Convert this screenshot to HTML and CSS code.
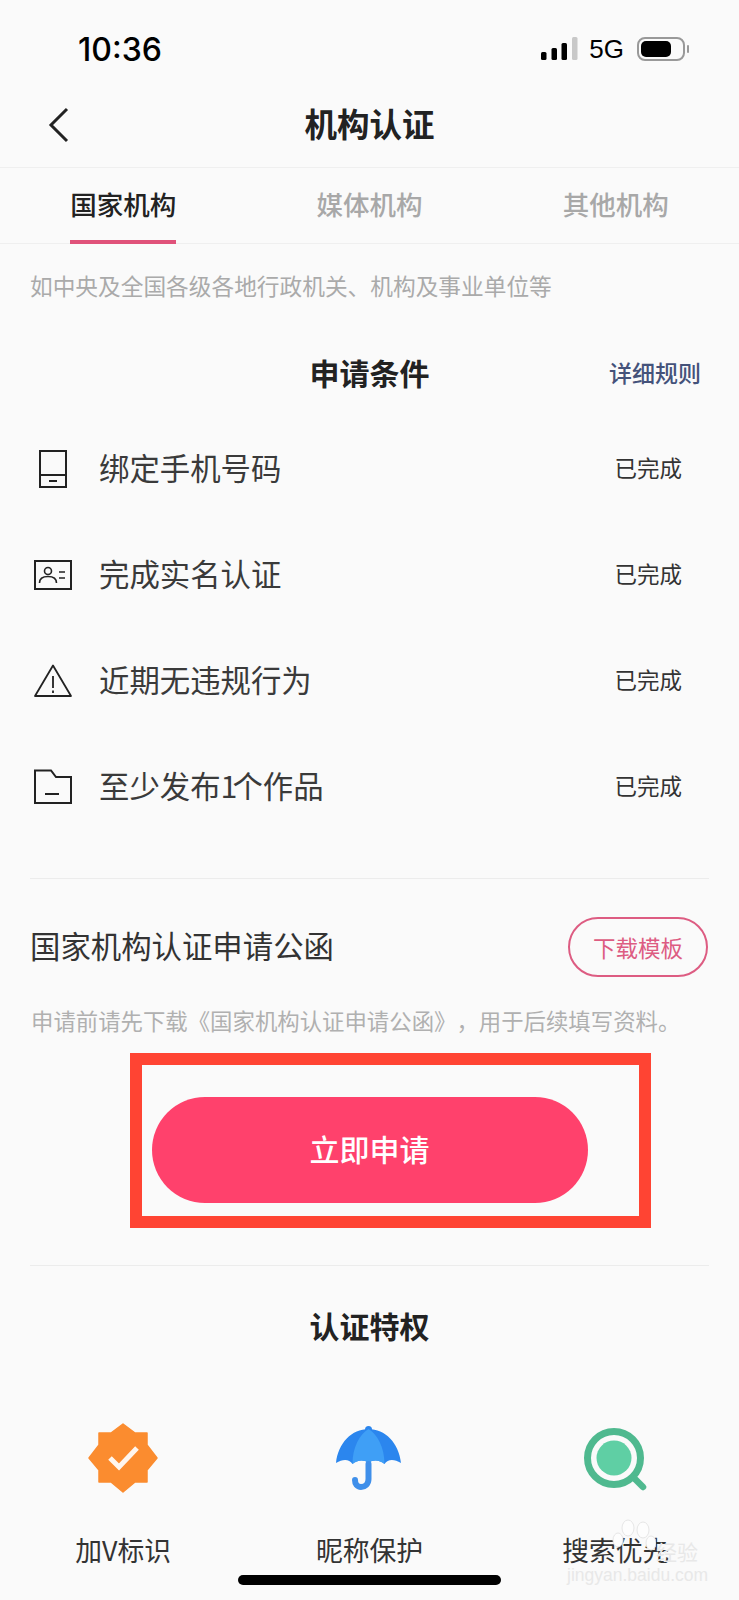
FILE: index.html
```html
<!DOCTYPE html>
<html lang="zh-CN">
<head>
<meta charset="UTF-8">
<meta name="viewport" content="width=device-width, initial-scale=1.0">
<title>机构认证</title>
<link rel="stylesheet" href="styles.css">
</head>
<body>

<div class="page">

  <div class="status">
    <span class="time">10:36</span>
    <div class="status-right">
      <svg class="signal" width="37" height="24" viewBox="0 0 37 24">
        <rect x="0" y="15" width="5.500" height="8" rx="1.500" fill="#000"/>
        <rect x="10.500" y="11" width="5.500" height="12" rx="1.500" fill="#000"/>
        <rect x="20.500" y="6" width="5.500" height="17" rx="1.500" fill="#000"/>
        <rect x="31" y="0" width="5.500" height="23" rx="1.500" fill="#c8c8c8"/>
      </svg>
      <span class="net">5G</span>
      <svg class="battery" width="53" height="24" viewBox="0 0 53 24">
        <rect x="1" y="1" width="46" height="22" rx="7" fill="none" stroke="#999" stroke-width="2"/>
        <rect x="4" y="4" width="30" height="16" rx="5" fill="#000"/>
        <rect x="50" y="8" width="2" height="8" rx="1" fill="#999"/>
      </svg>
    </div>
  </div>

  <header class="topbar">
    <svg class="back" width="22" height="36" viewBox="0 0 22 36">
      <polyline points="19,2 3,18 19,34" fill="none" stroke="#222" stroke-width="3"/>
    </svg>
    <h1>机构认证</h1>
  </header>

  <nav class="tabs">
    <a class="tab active" href="#"><span>国家机构</span></a>
    <a class="tab" href="#"><span>媒体机构</span></a>
    <a class="tab" href="#"><span>其他机构</span></a>
  </nav>

  <p class="desc">如中央及全国各级各地行政机关、机构及事业单位等</p>

  <div class="cond-head">
    <h2>申请条件</h2>
    <a class="rules" href="#">详细规则</a>
  </div>

  <ul class="conds">
    <li>
      <svg class="cond-icon" width="40" height="40" viewBox="0 0 40 40">
        <path d="M7 2H33V38H7ZM7 26H33M16 32H24" fill="none" stroke="#222" stroke-width="2"/>
      </svg>
      <span class="cond-name">绑定手机号码</span>
      <span class="cond-state">已完成</span>
    </li>
    <li>
      <svg class="cond-icon" width="40" height="40" viewBox="0 0 40 40">
        <rect x="2" y="6" width="36" height="28" fill="none" stroke="#222" stroke-width="2"/>
        <circle cx="15" cy="16" r="3.500" fill="none" stroke="#222" stroke-width="1.600"/>
        <path d="M6.500 28C6.500 23 10 21.500 15 21.500S23.500 23 23.500 28M26 17H32M26 23H32" fill="none" stroke="#222" stroke-width="1.600"/>
      </svg>
      <span class="cond-name">完成实名认证</span>
      <span class="cond-state">已完成</span>
    </li>
    <li>
      <svg class="cond-icon" width="40" height="40" viewBox="0 0 40 40">
        <path d="M20 4.500L38 35H2ZM20 15V27M20 29.500V32" fill="none" stroke="#222" stroke-width="1.800" stroke-linejoin="round"/>
      </svg>
      <span class="cond-name">近期无违规行为</span>
      <span class="cond-state">已完成</span>
    </li>
    <li>
      <svg class="cond-icon" width="40" height="40" viewBox="0 0 40 40">
        <path d="M2 3.500H18L23 10H38V36H2ZM12 27H26" fill="none" stroke="#222" stroke-width="2"/>
      </svg>
      <span class="cond-name">至少发布<span class="num">1</span>个作品</span>
      <span class="cond-state">已完成</span>
    </li>
  </ul>

  <hr class="line line-a">

  <div class="letter">
    <span class="letter-name">国家机构认证申请公函</span>
    <a class="download" href="#">下载模板</a>
  </div>
  <p class="note">申请前请先下载《国家机构认证申请公函》，用于后续填写资料。</p>

  <a class="apply" href="#">立即申请</a>

  <hr class="line line-b">

  <h2 class="perk-title">认证特权</h2>

  <div class="perks">
    <div class="perk">
      <svg width="70" height="70" viewBox="0 0 70 70">
        <path d="M35 1L47 10H59V22L69 35L59 47V59H47L35 69L23 59H11V47L1 35L11 22V10H23Z" fill="#fb8c2f" stroke="#fb8c2f" stroke-width="1.500" stroke-linejoin="round"/>
        <polyline points="22,35 31,44 49,25" fill="none" stroke="#fff6ee" stroke-width="5"/>
      </svg>
      <span>加V标识</span>
    </div>
    <div class="perk">
      <svg width="70" height="70" viewBox="0 0 70 70">
        <circle cx="34.500" cy="6.500" r="3.500" fill="#2b86ee"/>
        <path d="M2 40C4 20 18 6 34.500 6C51 6 65 20 67 40C60 36 54 36 50.500 41C46 37 39 36 34.500 40C30 36 23 37 18.500 41C15 36 9 36 2 40Z" fill="#2b86ee"/>
        <path d="M18.500 41C18.500 24 26 11 34.500 6C43 11 50.500 24 50.500 41C46 37 39 36 34.500 40C30 36 23 37 18.500 41Z" fill="#3f9ff6"/>
        <path d="M34.500 41V56C34.500 61 31 64 27 64C23 64 21 61 21 57" fill="none" stroke="#3f8fea" stroke-width="6" stroke-linecap="round"/>
      </svg>
      <span>昵称保护</span>
    </div>
    <div class="perk">
      <svg width="70" height="70" viewBox="0 0 70 70">
        <circle cx="33" cy="35" r="26.500" fill="none" stroke="#4fb98f" stroke-width="7"/>
        <circle cx="33" cy="35" r="17.500" fill="#5fcfa4"/>
        <line x1="54" y1="56" x2="62" y2="64" stroke="#4fb98f" stroke-width="6.500" stroke-linecap="round"/>
      </svg>
      <span>搜索优先</span>
    </div>
  </div>

  <!-- 红框标注 -->
  <div class="mark"></div>

  <!-- 水印 -->
  <div class="wm">
    <svg class="wm-paw" width="44" height="34" viewBox="0 0 44 34">
      <ellipse cx="16" cy="9" rx="6" ry="8" fill="#fdfdfd" stroke="#e6e6e6"/>
      <ellipse cx="31" cy="11" rx="6" ry="8" fill="#fdfdfd" stroke="#e6e6e6"/>
      <ellipse cx="6" cy="21" rx="5" ry="7" fill="#fdfdfd" stroke="#e6e6e6"/>
      <ellipse cx="39" cy="24" rx="5" ry="7" fill="#fdfdfd" stroke="#e6e6e6"/>
    </svg>
    <span class="wm-cn">经验</span>
    <span class="wm-en">jingyan.baidu.com</span>
  </div>

  <div class="home-bar"></div>
</div>

</body>
</html>
```

FILE: styles.css
```css
* { margin: 0; padding: 0; box-sizing: border-box; }
body { font-family: "Noto Sans CJK SC", "Liberation Sans", sans-serif; background: #fafafa; color: #333; text-spacing-trim: space-all; }
a { text-decoration: none; color: inherit; }
.page { position: relative; width: 739px; height: 1600px; overflow: hidden; background: #fafafa; }

/* status bar */
.status { height: 83px; padding: 15px 49px 0 78px; display: flex; justify-content: space-between; align-items: center; }
.time { font-family: Inter, "Liberation Sans", sans-serif; font-size: 32px; font-weight: 500; color: #000; }
.status-right { display: flex; align-items: center; }
.signal { margin-right: 11px; }
.net { font-family: "Liberation Sans", sans-serif; font-size: 26px; color: #000; margin-right: 13px; }

/* top bar */
.topbar { height: 85px; padding-bottom: 5px; display: flex; align-items: center; justify-content: center; position: relative; border-bottom: 1px solid #efefef; }
.topbar h1 { font-size: 32.500px; font-weight: 700; color: #222; }
.back { position: absolute; left: 48px; top: 24px; }

/* tabs */
.tabs { height: 76px; display: grid; grid-template-columns: repeat(3, 1fr); border-bottom: 1px solid #efefef; }
.tab { display: flex; justify-content: center; font-size: 26.500px; font-weight: 500; color: #a8a8a8; }
.tab span { height: 76px; line-height: 72px; border-bottom: 4px solid transparent; }
.tab.active { color: #222; }
.tab.active span { border-bottom-color: #e0527a; }

.desc { padding-left: 30px; margin-top: 24px; font-size: 22.700px; line-height: 36px; color: #aaa; }

/* conditions */
.cond-head { margin-top: 43px; padding: 0 38px; height: 50px; display: grid; grid-template-columns: 1fr auto 1fr; align-items: center; }
.cond-head h2 { grid-column: 2; font-size: 30px; font-weight: 700; color: #222; }
.rules { grid-column: 3; justify-self: end; font-size: 23px; font-weight: 500; color: #44527a; }
.conds { list-style: none; margin-top: 17px; }
.conds li { height: 106px; padding: 0 57px 0 33px; display: flex; align-items: center; }
.cond-icon { margin: 3px 26px 0 0; }
.cond-name { flex: 1; font-size: 30.400px; color: #3a3a3a; }
.num { letter-spacing: -5px; }
.cond-state { font-size: 22.500px; color: #333; }

.line { border: 0; height: 1px; background: #ececec; margin: 0 30px; }
.line-a { margin-top: 40px; }
.line-b { margin-top: 62px; }

/* letter */
.letter { margin-top: 38px; padding: 0 31px 0 30px; display: flex; justify-content: space-between; align-items: center; }
.letter-name { font-size: 30.400px; color: #333; padding-bottom: 5px; }
.download { width: 140px; height: 60px; border: 2px solid #dd5c82; border-radius: 30px; display: flex; align-items: center; justify-content: center; font-size: 22.500px; color: #dd5c82; }
.note { margin-top: 25px; padding-left: 31px; font-size: 22.400px; line-height: 36px; color: #b0b0b0; white-space: nowrap; }

.apply { display: flex; width: 436px; height: 106px; margin: 59px auto 0; padding-bottom: 4px; border-radius: 53px; background: #ff416c; align-items: center; justify-content: center; font-size: 30px; font-weight: 500; color: #fff; }

/* perks */
.perk-title { margin-top: 37px; text-align: center; font-size: 30px; font-weight: 700; line-height: 44px; color: #222; }
.perks { margin-top: 76px; display: grid; grid-template-columns: repeat(3, 1fr); }
.perk { display: flex; flex-direction: column; align-items: center; font-size: 26.800px; color: #333; }
.perk svg { margin-bottom: 38px; }
.perk span { line-height: 38px; }

/* overlays */
.mark { position: absolute; left: 130px; top: 1053px; width: 521px; height: 175px; border: 12px solid #ff4433; }
.wm { position: absolute; left: 567px; top: 1510px; width: 135px; height: 80px; color: #e8e8e8; }
.wm-paw { position: absolute; left: 45px; top: 9px; }
.wm-cn { position: absolute; right: 4px; top: 26px; font-size: 21px; }
.wm-en { position: absolute; left: 0; top: 55px; font-family: "Liberation Sans", sans-serif; font-size: 17.500px; white-space: nowrap; }
.home-bar { position: absolute; left: 238px; top: 1575px; width: 263px; height: 10px; border-radius: 5px; background: #000; }
```
